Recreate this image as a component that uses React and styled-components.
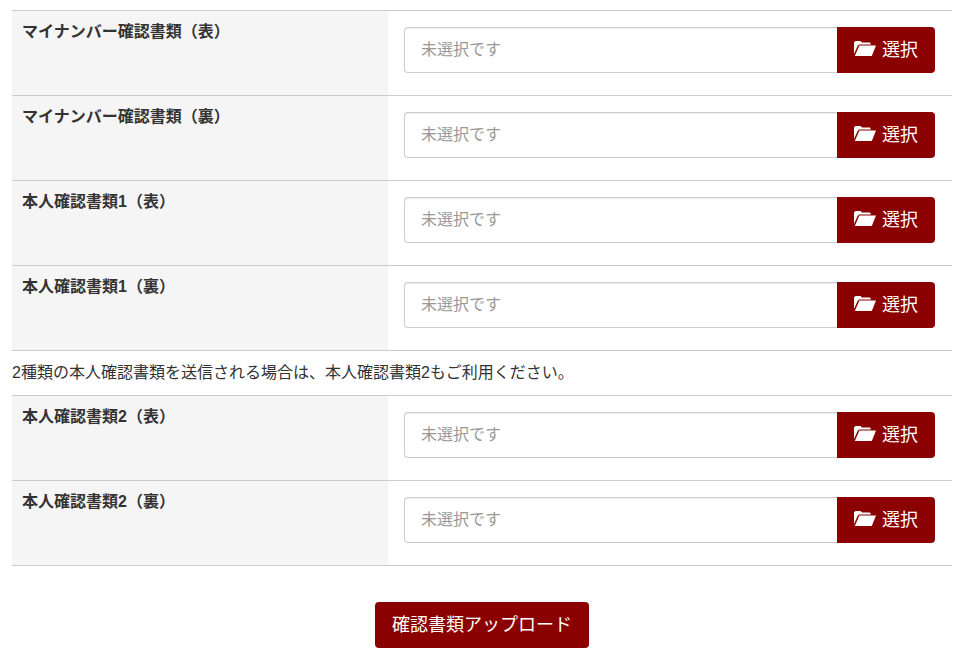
import React from "react";
import styled, { createGlobalStyle } from "styled-components";

const GlobalStyle = createGlobalStyle`
  html, body {
    margin: 0;
    padding: 0;
    background: #fff;
  }
  body {
    font-family: "Liberation Sans", "Noto Sans CJK JP", sans-serif;
    font-size: 16px;
    color: #333;
  }
`;

const Page = styled.div`
  padding: 10px 6px 0 12px;
`;

const Row = styled.div`
  display: grid;
  grid-template-columns: 376px 1fr;
  height: 85px;
  box-sizing: border-box;
  border-top: 1px solid #ccc;
`;

const Head = styled.div`
  background: #f5f5f5;
  padding: 11px 10px 0;
  font-size: 16px;
  line-height: 20px;
  font-weight: 700;
  color: #333;
`;

const Cell = styled.div`
  padding: 16px 17px 0 16px;
`;

const Picker = styled.div`
  display: flex;
  height: 46px;
`;

const FileName = styled.div`
  flex: 1;
  box-sizing: border-box;
  display: flex;
  align-items: center;
  padding: 0 16px 4px;
  background: #fff;
  border: 1px solid #ccc;
  border-right: 0;
  border-radius: 4px 0 0 4px;
  box-shadow: inset 0 1px 1px rgba(0, 0, 0, 0.075);
  color: #999;
  font-size: 16px;
`;

const SelectButton = styled.div`
  width: 98px;
  box-sizing: border-box;
  padding-bottom: 4px;
  display: flex;
  align-items: center;
  justify-content: center;
  gap: 6px;
  background: #8b0000;
  border-radius: 0 4px 4px 0;
  color: #fff;
  font-size: 18px;
`;

const Note = styled.p`
  margin: 0;
  height: 45px;
  box-sizing: border-box;
  border-top: 1px solid #ccc;
  font-size: 16px;
  line-height: 44px;
  color: #333;
`;

const Rule = styled.div`
  border-top: 1px solid #ccc;
`;

const Actions = styled.div`
  display: flex;
  justify-content: center;
  padding-top: 36px;
`;

const UploadButton = styled.div`
  height: 46px;
  box-sizing: border-box;
  padding: 0 17px 4px;
  display: flex;
  align-items: center;
  background: #8b0000;
  border-radius: 4px;
  color: #fff;
  font-size: 18px;
`;

const FolderIcon = () => (
  <svg width="22" height="16" viewBox="0 0 22 16" aria-hidden="true">
    <path d="M0 14V2.5L1.5 1h5L8 2.5h8l1 2H5L3.6 6z" fill="#fff" />
    <path d="M5.4 5.6H22L17.8 16H.8z" fill="#fff" />
  </svg>
);

const topRows = [
  "マイナンバー確認書類（表）",
  "マイナンバー確認書類（裏）",
  "本人確認書類1（表）",
  "本人確認書類1（裏）",
];

const bottomRows = ["本人確認書類2（表）", "本人確認書類2（裏）"];

const UploadRow = ({ label }) => (
  <Row>
    <Head>{label}</Head>
    <Cell>
      <Picker>
        <FileName>未選択です</FileName>
        <SelectButton>
          <FolderIcon />
          選択
        </SelectButton>
      </Picker>
    </Cell>
  </Row>
);

export default function App() {
  return (
    <Page>
      <GlobalStyle />
      {topRows.map((label) => (
        <UploadRow key={label} label={label} />
      ))}
      <Note>2種類の本人確認書類を送信される場合は、本人確認書類2もご利用ください。</Note>
      {bottomRows.map((label) => (
        <UploadRow key={label} label={label} />
      ))}
      <Rule />
      <Actions>
        <UploadButton>確認書類アップロード</UploadButton>
      </Actions>
    </Page>
  );
}
